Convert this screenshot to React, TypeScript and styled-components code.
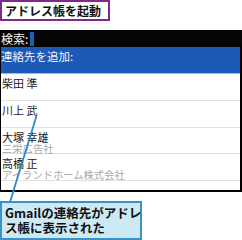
import React from "react";
import styled, { createGlobalStyle } from "styled-components";

const Global = createGlobalStyle`
  html, body { margin: 0; padding: 0; background: #fff; }
  body { font-family: "Noto Sans CJK JP", "Noto Sans", sans-serif; }
`;

const Page = styled.div`
  position: relative;
  width: 242px;
  height: 240px;
  overflow: hidden;
  display: flex;
  flex-direction: column;
`;

const TitleBox = styled.div`
  box-sizing: border-box;
  width: 110px;
  height: 21px;
  border: 2px solid #83288a;
  padding: 0 0 0 3px;
  font-size: 12px;
  font-weight: 700;
  line-height: 17px;
  color: #111;
  white-space: nowrap;
`;

const Screen = styled.div`
  box-sizing: border-box;
  margin-top: 9px;
  width: 242px;
  height: 162px;
  border-left: 1px solid #000;
  border-right: 2px solid #000;
  border-bottom: 2px solid #000;
  display: flex;
  flex-direction: column;
  background: #fff;
`;

const SearchBar = styled.div`
  height: 17px;
  background: #050505;
  color: #f4f4f4;
  font-size: 12px;
  line-height: 16px;
  display: flex;
  align-items: center;
  margin-right: -2px;
  margin-left: -1px;
  padding-left: 1px;
`;

const Cursor = styled.span`
  display: inline-block;
  width: 4px;
  height: 14px;
  margin-left: 2px;
  background: #1d5fb8;
`;

const AddBar = styled.div`
  box-sizing: border-box;
  height: 27px;
  background: #1c5ab6;
  border-bottom: 1px solid #9fb9e0;
  color: #f2f5fb;
  font-size: 11.5px;
  line-height: 14px;
  padding: 2px 0 0 0;
`;

const Row = styled.div<{ $h: number }>`
  height: ${(p) => p.$h}px;
  box-sizing: border-box;
  border-bottom: 1px solid #e2e2e2;
  padding: 3px 0 0 1px;
  display: flex;
  flex-direction: column;
`;

const Name = styled.div`
  font-size: 11px;
  line-height: 12px;
  color: #1a1a1a;
  white-space: nowrap;
`;

const Sub = styled.div`
  font-size: 10.3px;
  line-height: 11px;
  color: #a8a8a8;
  white-space: nowrap;
`;

const Callout = styled.div`
  box-sizing: border-box;
  margin-top: 9px;
  width: 142px;
  height: 39px;
  background: #cdeaf4;
  border: 2px solid #3a92c6;
  padding: 2px 0 0 3px;
  font-size: 12.5px;
  font-weight: 700;
  line-height: 15px;
  color: #111;
  white-space: nowrap;
`;

const Leader = styled.svg`
  position: absolute;
  left: 0;
  top: 0;
  pointer-events: none;
`;

export default function App() {
  return (
    <>
      <Global />
      <Page>
        <TitleBox>アドレス帳を起動</TitleBox>
        <Screen>
          <SearchBar>
            検索:<Cursor />
          </SearchBar>
          <AddBar>連絡先を追加:</AddBar>
          <Row $h={27}>
            <Name>柴田 準</Name>
          </Row>
          <Row $h={27}>
            <Name>川上 武</Name>
          </Row>
          <Row $h={26}>
            <Name>大塚 幸雄</Name>
            <Sub>三栄広告社</Sub>
          </Row>
          <Row $h={27}>
            <Name>高橋 正</Name>
            <Sub>アイランドホーム株式会社</Sub>
          </Row>
        </Screen>
        <Callout>
          Gmailの連絡先がアドレ
          <br />
          ス帳に表示された
        </Callout>
        <Leader width="242" height="240" viewBox="0 0 242 240">
          <line x1="36.5" y1="116" x2="10" y2="202" stroke="#2b8ac6" strokeWidth="1.8" />
        </Leader>
      </Page>
    </>
  );
}
